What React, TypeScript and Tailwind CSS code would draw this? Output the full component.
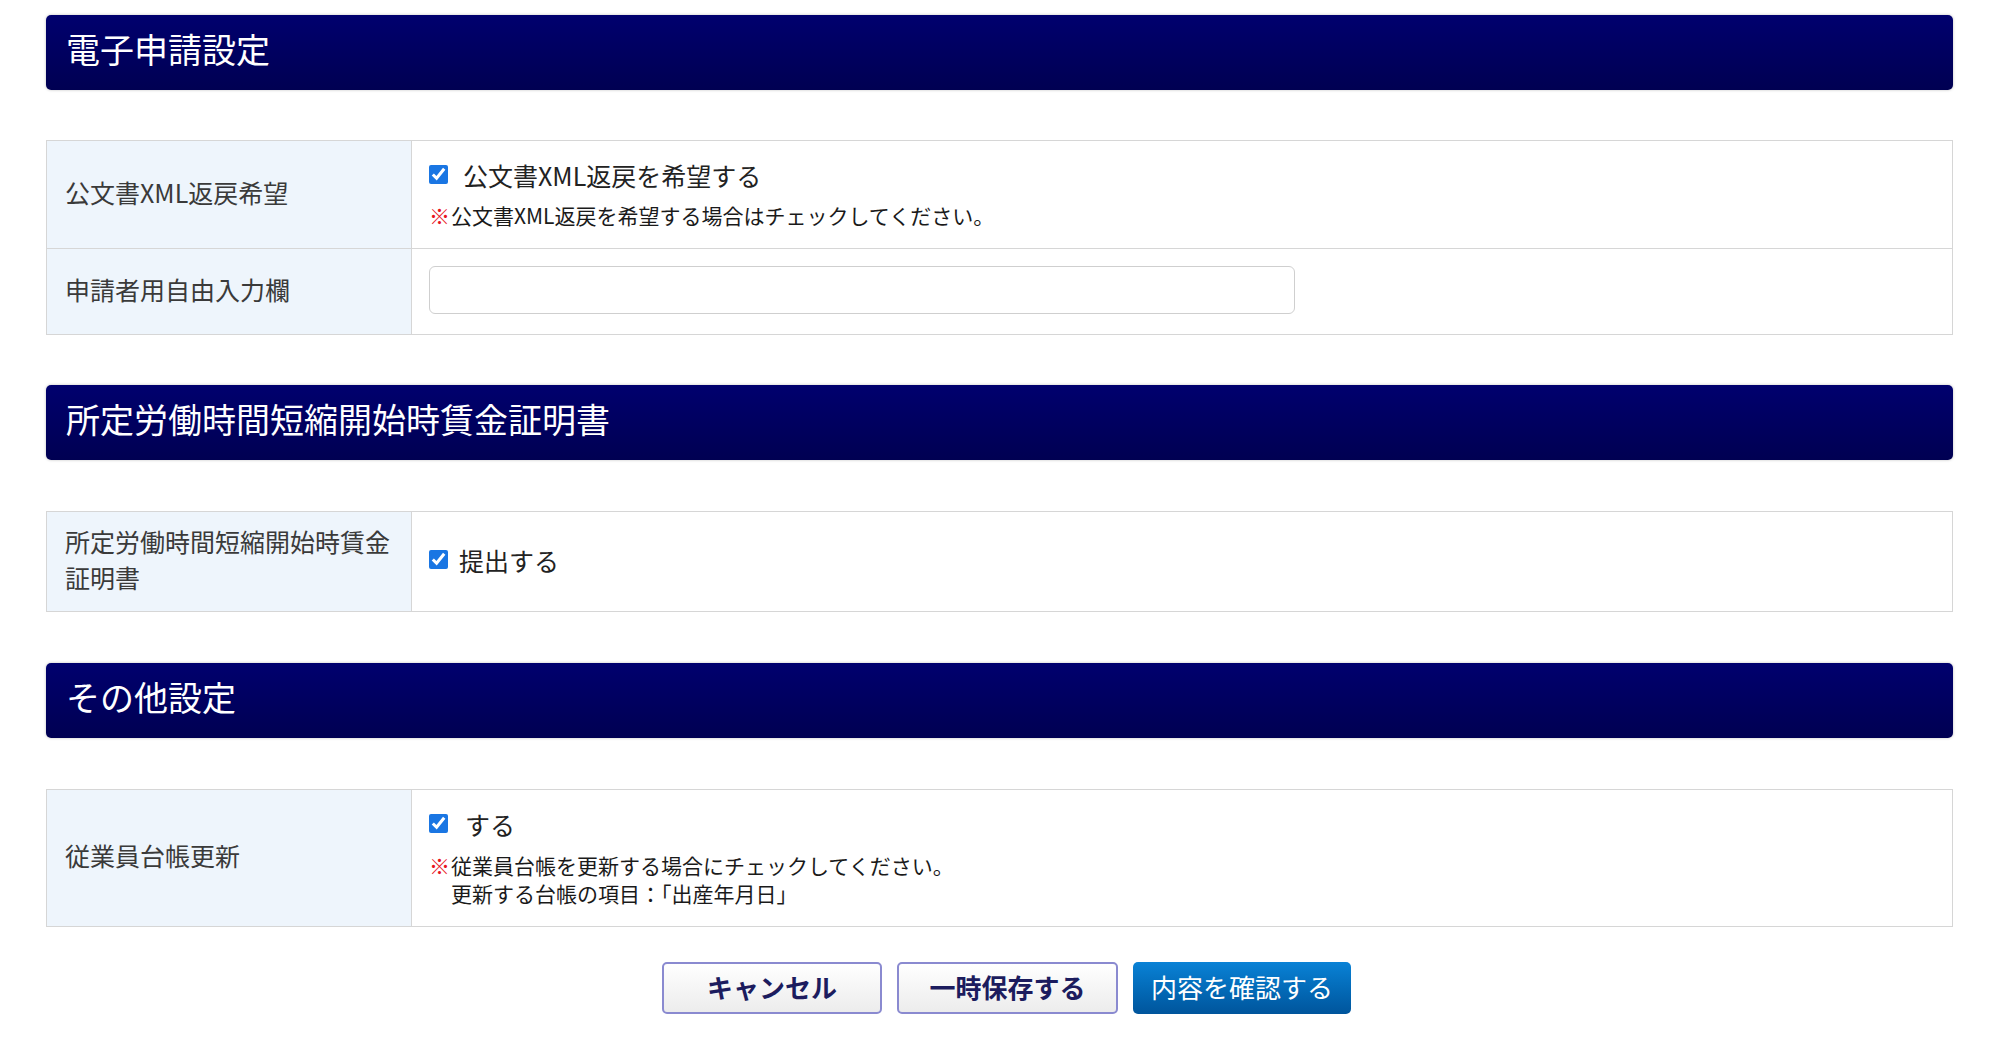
import React from 'react';

const SectionHeader = ({ title }: { title: string }) => (
    <div className="h-[75px] flex items-center pl-[20px] pb-[7px] rounded-[5px] bg-gradient-to-b from-[#00006e] to-[#000052] shadow-[0_0_3px_rgba(0,0,0,0.25)]">
        <h2 className="text-white text-[34px] leading-none font-normal">{title}</h2>
    </div>
);

const Row = ({ label, children, className = '' }: { label: React.ReactNode; children: React.ReactNode; className?: string }) => (
    <div className={`grid grid-cols-[365px_1fr] ${className}`}>
        <div className="bg-[#eef5fc] border-r border-[#d6d6d6] flex items-center px-[18px] pb-[6px] text-[25px] leading-[36px] text-[#3a3a3a]">
            {label}
        </div>
        <div className="flex flex-col justify-center pl-[17px] pr-[20px] pb-[4px]">{children}</div>
    </div>
);

const Check = ({ label, gap }: { label: string; gap: string }) => (
    <label className={`flex items-center ${gap} text-[25px] leading-[36px] text-[#222]`}>
        <input type="checkbox" defaultChecked className="w-[19px] h-[19px] m-0 accent-[#1a76e3]" />
        <span>{label}</span>
    </label>
);

const Note = ({ lines }: { lines: string[] }) => (
    <div className="flex text-[21px] leading-[28px] text-[#1a1a1a]">
        <span className="text-[#e8141e] font-bold w-[22px] shrink-0">※</span>
        <div>
            {lines.map((l) => (
                <div key={l}>{l}</div>
            ))}
        </div>
    </div>
);

export default function App() {
    return (
        <div className="bg-white min-h-[1056px] pl-[46px] pr-[47px] pt-[15px] font-['Noto_Sans_CJK_JP','Noto_Sans',sans-serif]">
            <SectionHeader title="電子申請設定" />

            <div className="mt-[50px] border border-[#d6d6d6]">
                <Row label="公文書XML返戻希望" className="h-[107px]">
                    <Check label="公文書XML返戻を希望する" gap="gap-[15px]" />
                    <div className="mt-[8px]">
                        <Note lines={['公文書XML返戻を希望する場合はチェックしてください。']} />
                    </div>
                </Row>
                <Row label="申請者用自由入力欄" className="h-[86px] border-t border-[#d6d6d6]">
                    <input
                        type="text"
                        className="w-[866px] h-[48px] border border-[#cfcfcf] rounded-[6px] px-3 text-[22px] outline-none"
                    />
                </Row>
            </div>

            <div className="mt-[50px]">
                <SectionHeader title="所定労働時間短縮開始時賃金証明書" />
            </div>

            <div className="mt-[51px] border border-[#d6d6d6]">
                <Row label="所定労働時間短縮開始時賃金証明書" className="h-[99px]">
                    <Check label="提出する" gap="gap-[11px]" />
                </Row>
            </div>

            <div className="mt-[51px]">
                <SectionHeader title="その他設定" />
            </div>

            <div className="mt-[51px] border border-[#d6d6d6]">
                <Row label="従業員台帳更新" className="h-[136px]">
                    <Check label="する" gap="gap-[17px]" />
                    <div className="mt-[9px]">
                        <Note lines={['従業員台帳を更新する場合にチェックしてください。', '更新する台帳の項目：「出産年月日」']} />
                    </div>
                </Row>
            </div>

            <div className="mt-[35px] flex justify-center gap-[15px] pl-[14px]">
                <button className="w-[220px] h-[52px] rounded-[5px] border-2 border-[#8a8ad0] bg-gradient-to-b from-white to-[#ececec] text-[26px] font-bold text-[#1c1c5e] pb-[3px]">
                    キャンセル
                </button>
                <button className="w-[221px] h-[52px] rounded-[5px] border-2 border-[#8a8ad0] bg-gradient-to-b from-white to-[#ececec] text-[26px] font-bold text-[#1c1c5e] pb-[3px]">
                    一時保存する
                </button>
                <button className="w-[218px] h-[52px] rounded-[5px] bg-gradient-to-b from-[#0a82d6] to-[#00559c] text-[26px] text-white pb-[3px]">
                    内容を確認する
                </button>
            </div>
        </div>
    );
}
